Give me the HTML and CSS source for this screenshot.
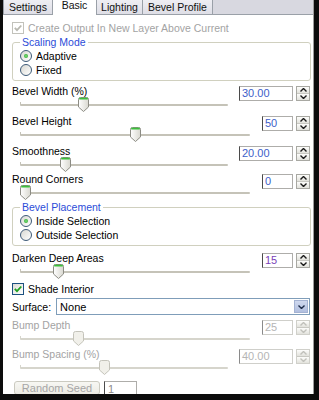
FILE: index.html
```html
<!DOCTYPE html>
<html lang="en">
<head>
    <meta charset="UTF-8">
    <title>Bevel - Basic</title>
    <link rel="stylesheet" href="styles.css">
</head>
<body>
    <svg class="defs" width="0" height="0">
        <defs>
            <linearGradient id="thumbFill" x1="0" y1="0" x2="1" y2="0">
                <stop offset="0" stop-color="#ffffff"/>
                <stop offset="1" stop-color="#d9d8d0"/>
            </linearGradient>
            <symbol id="thumb" viewBox="0 0 11 15">
                <path d="M.5 2.5a2 2 0 0 1 2-2h6a2 2 0 0 1 2 2v7.5l-5 4.5-5-4.5z" fill="url(#thumbFill)" stroke="#8c8c84"/>
                <path d="M1.2 1.6h8.6" stroke="#3cc03c" stroke-width="1.8"/>
            </symbol>
            <symbol id="thumbOff" viewBox="0 0 11 15">
                <path d="M.5 2.5a2 2 0 0 1 2-2h6a2 2 0 0 1 2 2v7.5l-5 4.5-5-4.5z" fill="#f1f0ea" stroke="#c4c3ba"/>
            </symbol>
            <symbol id="tick" viewBox="0 0 10 10">
                <path d="M1.8 4.8l2.2 2.3 4.3-4.6" fill="none" stroke-width="1.8"/>
            </symbol>
            <symbol id="up" viewBox="0 0 7 4">
                <path d="M.5 3.5l3-3 3 3" fill="none" stroke-width="1.4"/>
            </symbol>
            <symbol id="down" viewBox="0 0 7 4">
                <path d="M.5 .5l3 3 3-3" fill="none" stroke-width="1.4"/>
            </symbol>
        </defs>
    </svg>

    <div class="window">
        <div class="tabs">
            <div class="tab tab-settings">Settings</div>
            <div class="tab tab-basic active">Basic</div>
            <div class="tab tab-lighting">Lighting</div>
            <div class="tab tab-profile">Bevel Profile</div>
        </div>

        <div class="panel">
            <div class="check disabled">
                <span class="box"><svg class="tick"><use href="#tick"/></svg></span>
                Create Output In New Layer Above Current
            </div>

            <fieldset class="group">
                <legend>Scaling Mode</legend>
                <div class="option"><span class="radio on"></span>Adaptive</div>
                <div class="option"><span class="radio"></span>Fixed</div>
            </fieldset>

            <div class="slider-block first">
                <div class="slider-main wide">
                    <div class="label">Bevel Width (%)</div>
                    <div class="slider"><div class="track"></div><svg class="thumb" style="left: 58px"><use href="#thumb"/></svg></div>
                </div>
                <div class="spin">
                    <div class="spin-input wide">30.00</div>
                    <div class="spin-btns"><span><svg><use href="#up"/></svg></span><span><svg><use href="#down"/></svg></span></div>
                </div>
            </div>

            <div class="slider-block">
                <div class="slider-main">
                    <div class="label">Bevel Height</div>
                    <div class="slider"><div class="track"></div><svg class="thumb" style="left: 110px"><use href="#thumb"/></svg></div>
                </div>
                <div class="spin">
                    <div class="spin-input">50</div>
                    <div class="spin-btns"><span><svg><use href="#up"/></svg></span><span><svg><use href="#down"/></svg></span></div>
                </div>
            </div>

            <div class="slider-block">
                <div class="slider-main wide">
                    <div class="label">Smoothness</div>
                    <div class="slider"><div class="track"></div><svg class="thumb" style="left: 40px"><use href="#thumb"/></svg></div>
                </div>
                <div class="spin">
                    <div class="spin-input wide">20.00</div>
                    <div class="spin-btns"><span><svg><use href="#up"/></svg></span><span><svg><use href="#down"/></svg></span></div>
                </div>
            </div>

            <div class="slider-block tight">
                <div class="slider-main">
                    <div class="label">Round Corners</div>
                    <div class="slider"><div class="track"></div><svg class="thumb" style="left: 0px"><use href="#thumb"/></svg></div>
                </div>
                <div class="spin">
                    <div class="spin-input">0</div>
                    <div class="spin-btns"><span><svg><use href="#up"/></svg></span><span><svg><use href="#down"/></svg></span></div>
                </div>
            </div>

            <fieldset class="group placement">
                <legend>Bevel Placement</legend>
                <div class="option"><span class="radio on"></span>Inside Selection</div>
                <div class="option"><span class="radio"></span>Outside Selection</div>
            </fieldset>

            <div class="slider-block darken">
                <div class="slider-main">
                    <div class="label">Darken Deep Areas</div>
                    <div class="slider"><div class="track"></div><svg class="thumb" style="left: 33px"><use href="#thumb"/></svg></div>
                </div>
                <div class="spin">
                    <div class="spin-input purple">15</div>
                    <div class="spin-btns"><span><svg><use href="#up"/></svg></span><span><svg><use href="#down"/></svg></span></div>
                </div>
            </div>

            <div class="check shade">
                <span class="box"><svg class="tick"><use href="#tick"/></svg></span>
                Shade Interior
            </div>

            <div class="select-row">
                <span>Surface:</span>
                <div class="select">
                    None
                    <span class="drop"><svg><use href="#down"/></svg></span>
                </div>
            </div>

            <div class="slider-block disabled bump">
                <div class="slider-main">
                    <div class="label">Bump Depth</div>
                    <div class="slider"><div class="track"></div><svg class="thumb" style="left: 53px"><use href="#thumbOff"/></svg></div>
                </div>
                <div class="spin">
                    <div class="spin-input">25</div>
                    <div class="spin-btns"><span><svg><use href="#up"/></svg></span><span><svg><use href="#down"/></svg></span></div>
                </div>
            </div>

            <div class="slider-block disabled spacing">
                <div class="slider-main wide">
                    <div class="label">Bump Spacing (%)</div>
                    <div class="slider"><div class="track"></div><svg class="thumb" style="left: 79px"><use href="#thumbOff"/></svg></div>
                </div>
                <div class="spin">
                    <div class="spin-input wide">40.00</div>
                    <div class="spin-btns"><span><svg><use href="#up"/></svg></span><span><svg><use href="#down"/></svg></span></div>
                </div>
            </div>

            <div class="seed-row">
                <div class="seed-btn">Random Seed</div>
                <div class="seed-input">1</div>
            </div>
        </div>
    </div>
</body>
</html>
```

FILE: styles.css
```css
body {
    margin: 0;
    background-color: #0c0c0c;
    font-family: "Liberation Sans", Arial, sans-serif;
    font-size: 10.5px;
    color: #000;
}
.defs {
    position: absolute;
}
.window {
    margin-left: 3px;
    width: 311px;
    height: 394px;
    background-color: #fff;
    border-right: 1px solid #9c9c9c;
    box-sizing: border-box;
    display: flex;
    flex-direction: column;
    overflow: hidden;
}

/* tabs */
.tabs {
    display: flex;
    align-items: flex-start;
    height: 15px;
    flex: none;
    background-color: #d8d8e0;
    border-bottom: 1px solid #9aa0a8;
    box-sizing: border-box;
}
.tab {
    height: 14px;
    line-height: 14px;
    text-align: center;
    background: linear-gradient(#eeeef3, #dedee6);
    border-right: 1px solid #9aa0a8;
    box-sizing: border-box;
    color: #111;
}
.tab-settings { width: 50px; border-left: 1px solid #9aa0a8; }
.tab-basic { width: 44px; }
.tab-lighting { width: 46px; }
.tab-profile { width: 70px; }
.tab.active {
    background: #fff;
    height: 15px;
    line-height: 11px;
    position: relative;
    z-index: 1;
}

.panel {
    flex: 1;
    padding: 6px 2px 0 9px;
}

/* checkboxes */
.check {
    display: flex;
    align-items: center;
    gap: 4px;
    height: 14px;
}
.box {
    width: 12px;
    height: 12px;
    border: 1px solid #1c5180;
    box-sizing: border-box;
    background: linear-gradient(135deg, #dcdcd6, #fff);
    display: flex;
    align-items: center;
    justify-content: center;
}
.tick {
    width: 10px;
    height: 10px;
    stroke: #21a121;
}
.check.disabled {
    color: #a3a3a3;
}
.check.disabled .box {
    border-color: #c2c2bb;
    background: #fff;
}
.check.disabled .tick {
    stroke: #b8b8b0;
}
.check.shade {
    margin-top: 3px;
}

/* group boxes */
.group {
    margin: 1px 0 0;
    padding: 0 0 3px 7px;
    border: 1px solid #d0d0bf;
    border-radius: 3px;
}
.group legend {
    color: #2b4cd8;
    padding: 0 2px;
    line-height: 13px;
}
.group.placement {
    margin-top: 1px;
}
.option {
    display: flex;
    align-items: center;
    gap: 4px;
    height: 14px;
}
.radio {
    width: 12px;
    height: 12px;
    border-radius: 50%;
    border: 1px solid #3d5a78;
    box-sizing: border-box;
    background: linear-gradient(135deg, #d8d8d2, #fff);
    display: flex;
    align-items: center;
    justify-content: center;
}
.radio.on::after {
    content: "";
    width: 4px;
    height: 4px;
    border-radius: 50%;
    background: radial-gradient(#7ee27e, #1f9a1f);
}

/* sliders */
.slider-block {
    display: flex;
    margin-top: 2px;
}
.slider-block.first { margin-top: 3px; }
.slider-block.tight { margin-top: 0; }
.slider-block.darken { margin-top: 5px; }
.slider-block.bump { margin-top: 3px; }
.slider-block.spacing { margin-top: 1px; }
.slider-main {
    flex: 1;
    margin-right: 12px;
}
.slider-main.wide {
    margin-right: 11px;
}
.label {
    height: 14px;
    line-height: 14px;
}
.slider {
    position: relative;
    height: 14px;
    margin-left: 8px;
}
.track {
    position: relative;
    top: 6px;
    height: 2px;
    background-color: #c5c3b8;
    border-radius: 1px;
}
.track::before {
    content: "";
    position: absolute;
    left: 0;
    top: -2px;
    width: 1px;
    height: 3px;
    background-color: #c5c3b8;
}
.thumb {
    position: absolute;
    top: -1px;
    width: 11px;
    height: 15px;
}

/* spin boxes */
.spin {
    display: flex;
    gap: 3px;
    height: 15px;
    margin-top: 2px;
    margin-right: 1px;
}
.spin-input {
    width: 31px;
    border: 1px solid #aeadaa;
    border-left: 1px solid #4a4a4a;
    box-sizing: border-box;
    padding-left: 2px;
    font-size: 11px;
    line-height: 13px;
    color: #3d5ec9;
}
.spin-input.wide {
    width: 54px;
}
.spin-input.purple {
    color: #7a3fb8;
}
.spin-btns {
    width: 14px;
    display: flex;
    flex-direction: column;
    border: 1px solid #a8a8a2;
    box-sizing: border-box;
}
.spin-btns span {
    flex: 1;
    display: flex;
    align-items: center;
    justify-content: center;
    background: linear-gradient(#fdfdfb, #e2e2dc);
}
.spin-btns span + span {
    border-top: 1px solid #c8c8c2;
}
.spin-btns svg {
    width: 7px;
    height: 4px;
    stroke: #1a1a1a;
}
.disabled .label {
    color: #a3a3a3;
}
.disabled .track,
.disabled .track::before {
    background-color: #d6d5cc;
}
.disabled .spin-input {
    color: #b5b5b5;
    border-color: #cfcfca;
    border-left-color: #8a8a8a;
}
.disabled .spin-btns {
    border-color: #d0d0ca;
}
.disabled .spin-btns svg {
    stroke: #c0c0ba;
}

/* surface select */
.select-row {
    display: flex;
    align-items: center;
    gap: 5px;
    margin-top: 2px;
}
.select {
    flex: 1;
    height: 17px;
    margin-right: 1px;
    border: 1px solid #7f9db9;
    box-sizing: border-box;
    display: flex;
    align-items: center;
    padding-left: 3px;
    font-size: 11px;
}
.drop {
    margin-left: auto;
    margin-right: 1px;
    width: 14px;
    height: 13px;
    background: linear-gradient(#cfd8ee, #b1bfdf);
    border: 1px solid #a4b2d2;
    box-sizing: border-box;
    display: flex;
    align-items: center;
    justify-content: center;
}
.drop svg {
    width: 7px;
    height: 4px;
    stroke: #1c2a48;
}

/* random seed */
.seed-row {
    display: flex;
    gap: 4px;
    margin-top: 6px;
    padding-left: 2px;
}
.seed-btn {
    width: 86px;
    height: 14px;
    line-height: 13px;
    text-align: center;
    color: #a6a6a6;
    background: linear-gradient(#f7f7f3, #ecebe4);
    border: 1px solid #cbcac0;
    border-radius: 3px;
    box-sizing: border-box;
    font-size: 11px;
}
.seed-input {
    width: 33px;
    height: 16px;
    border: 1px solid #aeadaa;
    border-left-color: #4a4a4a;
    box-sizing: border-box;
    padding-left: 3px;
    line-height: 14px;
    color: #8c8c8c;
    font-size: 11px;
}
```
